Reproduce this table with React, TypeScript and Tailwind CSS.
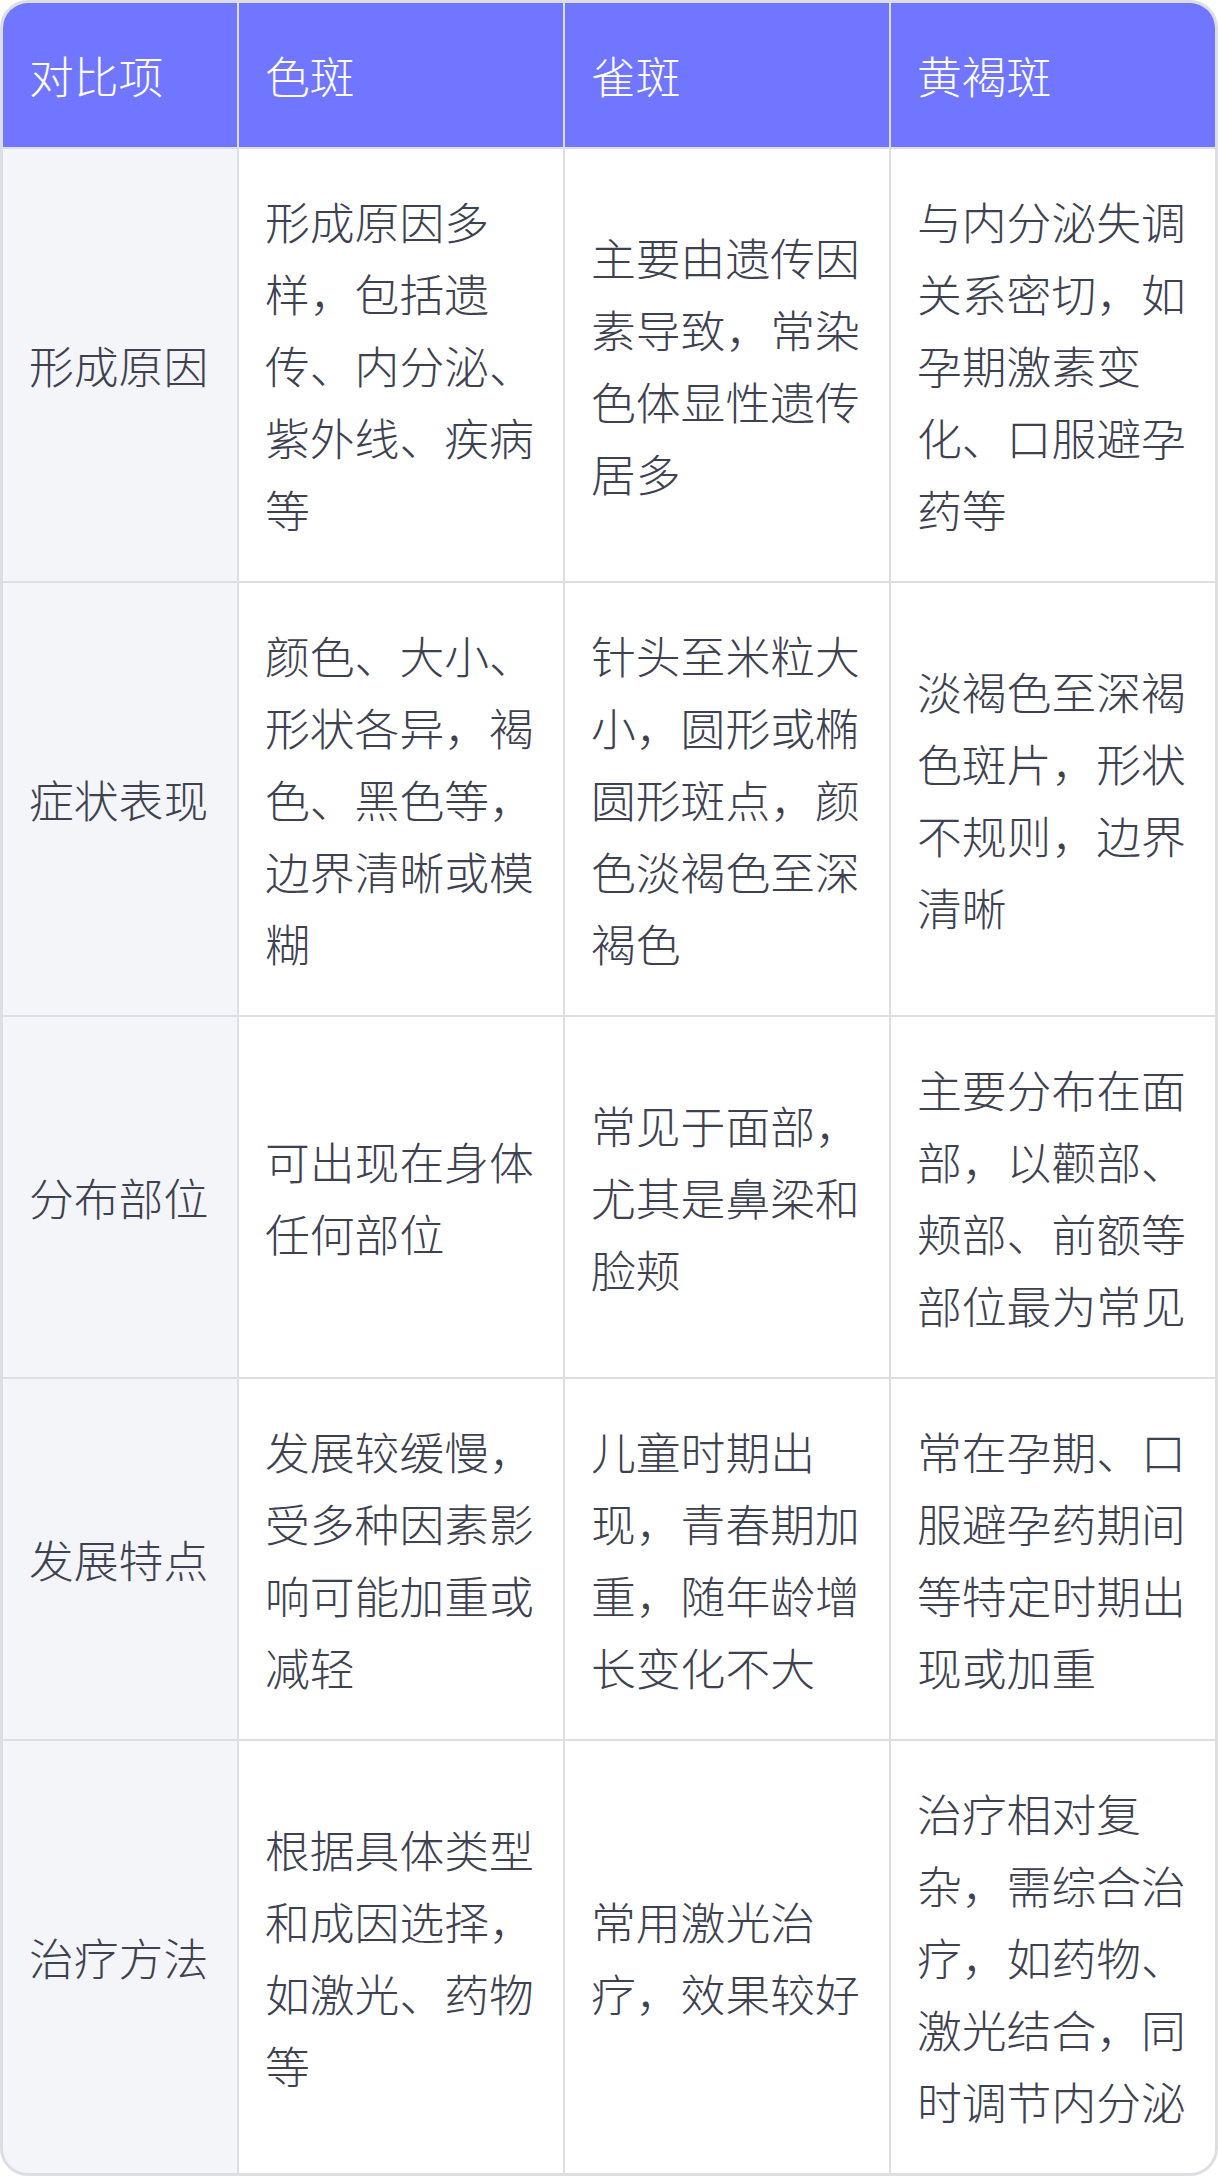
import React from 'react';

type Row = { label: string; cells: string[] };

const headers = ['对比项', '色斑', '雀斑', '黄褐斑'];

const rows: Row[] = [
  {
    label: '形成原因',
    cells: [
      '形成原因多样，包括遗传、内分泌、紫外线、疾病等',
      '主要由遗传因素导致，常染色体显性遗传居多',
      '与内分泌失调关系密切，如孕期激素变化、口服避孕药等',
    ],
  },
  {
    label: '症状表现',
    cells: [
      '颜色、大小、形状各异，褐色、黑色等，边界清晰或模糊',
      '针头至米粒大小，圆形或椭圆形斑点，颜色淡褐色至深褐色',
      '淡褐色至深褐色斑片，形状不规则，边界清晰',
    ],
  },
  {
    label: '分布部位',
    cells: ['可出现在身体任何部位', '常见于面部，尤其是鼻梁和脸颊', '主要分布在面部，以颧部、颊部、前额等部位最为常见'],
  },
  {
    label: '发展特点',
    cells: [
      '发展较缓慢，受多种因素影响可能加重或减轻',
      '儿童时期出现，青春期加重，随年龄增长变化不大',
      '常在孕期、口服避孕药期间等特定时期出现或加重',
    ],
  },
  {
    label: '治疗方法',
    cells: [
      '根据具体类型和成因选择，如激光、药物等',
      '常用激光治疗，效果较好',
      '治疗相对复杂，需综合治疗，如药物、激光结合，同时调节内分泌',
    ],
  },
];

const cell = 'flex items-center px-[26px] py-[36px]';

export default function App() {
  return (
    <div
      className="w-[1218px] min-h-[2176px] bg-white text-[44.8px] leading-[72px] font-light text-[#3d4150]"
      style={{ fontFamily: '"Noto Sans CJK SC", "Noto Sans", sans-serif' }}
    >
      <div className="overflow-hidden rounded-[28px] border-[3px] border-[#dddee3]">
        <div className="grid grid-cols-[234px_1fr_1fr_1fr] gap-[2px] bg-[#dddee3]">
          {headers.map((h) => (
            <div key={h} className={`${cell} bg-[#7076ff] text-white`}>
              {h}
            </div>
          ))}
          {rows.map((row) => (
            <React.Fragment key={row.label}>
              <div className={`${cell} bg-[#f4f5f9]`}>{row.label}</div>
              {row.cells.map((c, i) => (
                <div key={i} className={`${cell} bg-white`}>
                  <span>{c}</span>
                </div>
              ))}
            </React.Fragment>
          ))}
        </div>
      </div>
    </div>
  );
}
